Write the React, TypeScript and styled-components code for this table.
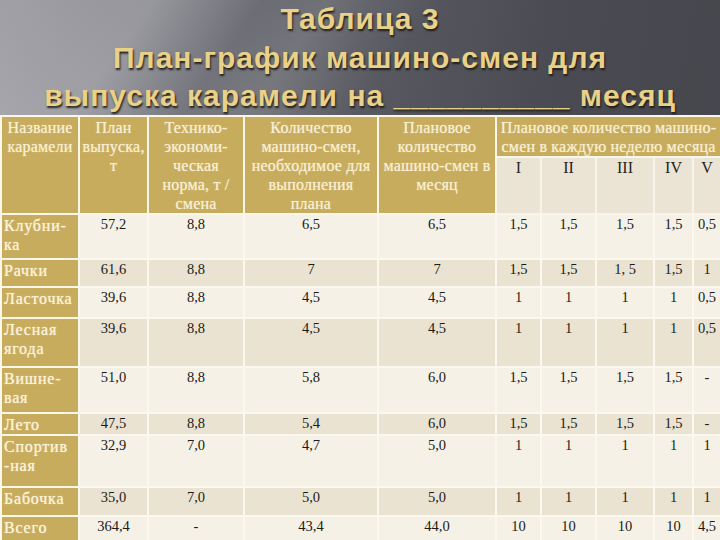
import React from 'react';
import styled, { createGlobalStyle } from 'styled-components';

const GlobalStyle = createGlobalStyle`
    body {
        margin: 0;
        background: #4c4c54;
    }
`;

interface IRow {
    name: React.ReactNode,
    plan: string,
    norm: string,
    need: string,
    month: string,
    weeks: string[],
    height: number
}

const rows: IRow[] = [
    {name: <>Клубни-<br/>ка</>, plan: '57,2', norm: '8,8', need: '6,5', month: '6,5', weeks: ['1,5', '1,5', '1,5', '1,5', '0,5'], height: 45},
    {name: 'Рачки', plan: '61,6', norm: '8,8', need: '7', month: '7', weeks: ['1,5', '1,5', '1, 5', '1,5', '1'], height: 28},
    {name: 'Ласточка', plan: '39,6', norm: '8,8', need: '4,5', month: '4,5', weeks: ['1', '1', '1', '1', '0,5'], height: 31},
    {name: <>Лесная<br/>ягода</>, plan: '39,6', norm: '8,8', need: '4,5', month: '4,5', weeks: ['1', '1', '1', '1', '0,5'], height: 49},
    {name: <>Вишне-<br/>вая</>, plan: '51,0', norm: '8,8', need: '5,8', month: '6,0', weeks: ['1,5', '1,5', '1,5', '1,5', '-'], height: 46},
    {name: 'Лето', plan: '47,5', norm: '8,8', need: '5,4', month: '6,0', weeks: ['1,5', '1,5', '1,5', '1,5', '-'], height: 20},
    {name: <>Спортив<br/>-ная</>, plan: '32,9', norm: '7,0', need: '4,7', month: '5,0', weeks: ['1', '1', '1', '1', '1'], height: 52},
    {name: 'Бабочка', plan: '35,0', norm: '7,0', need: '5,0', month: '5,0', weeks: ['1', '1', '1', '1', '1'], height: 29},
    {name: 'Всего', plan: '364,4', norm: '-', need: '43,4', month: '44,0', weeks: ['10', '10', '10', '10', '4,5'], height: 32},
];

const colWidths = [78, 69, 96, 134, 118, 45, 55, 58, 39, 28];

const Slide = styled.div`
    width: 720px;
    height: 540px;
    overflow: hidden;
    background:
        linear-gradient(125deg, rgba(255,255,255,0) 0%, rgba(255,255,255,0.18) 14%, rgba(255,255,255,0) 24%, rgba(255,255,255,0.1) 30%, rgba(255,255,255,0) 40%),
        linear-gradient(100deg, #a0a0a6 0%, #7a7a82 22%, #5a5a62 45%, #4a4a52 70%, #45454c 100%);
`;

const Title = styled.h1`
    margin: 0;
    height: 115px;
    text-align: center;
    font-family: "Liberation Sans", Arial, sans-serif;
    font-weight: bold;
    font-size: 30px;
    line-height: 38.5px;
    color: #e9d189;
    text-shadow: 1px 2px 2px rgba(25, 24, 18, 0.9);
    letter-spacing: 1px;
`;

const Grid = styled.table`
    table-layout: fixed;
    width: 720px;
    border-collapse: collapse;
    font-family: "Liberation Serif", "Times New Roman", serif;
`;

const Row = styled.tr<{h: number}>`
    height: ${props => props.h}px;
`;

const HeadCell = styled.th`
    background: #c8ac5e;
    color: #f8f0d4;
    font-weight: normal;
    font-size: 16px;
    line-height: 19px;
    letter-spacing: 0.2px;
    padding: 1px 0 0;
    vertical-align: top;
    text-align: center;
    white-space: nowrap;
    overflow: hidden;
    border: 2px solid #fbf7ea;
    text-shadow: 0 0 1px rgba(255, 250, 220, 0.6);
`;

const WeekCell = styled.th`
    background: #ebe4d5;
    color: #262420;
    font-weight: normal;
    font-size: 16px;
    line-height: 19px;
    padding: 0;
    vertical-align: top;
    text-align: center;
    border: 2px solid #f8f4ea;
`;

const NameCell = styled.td`
    background: #c8ac5e;
    color: #fbf3da;
    font-size: 16px;
    line-height: 19px;
    letter-spacing: 0.8px;
    padding: 1px 0 0 2px;
    vertical-align: top;
    white-space: nowrap;
    overflow: hidden;
    border: 2px solid #fbf7ea;
    text-shadow: 0 0 1px rgba(255, 250, 220, 0.8);
`;

const NumCell = styled.td<{shade: boolean}>`
    background: ${props => props.shade ? '#eae3d2' : '#f5f1e7'};
    color: #1c1b18;
    font-size: 14.5px;
    line-height: 19px;
    padding: 0;
    vertical-align: top;
    text-align: center;
    white-space: nowrap;
    border: 2px solid #fbf8ef;
`;

const App = () => {
    return <>
        <GlobalStyle/>
        <Slide>
            <Title>
                Таблица 3<br/>
                План-график машино-смен для<br/>
                выпуска карамели на __________ месяц
            </Title>
            <Grid>
                <colgroup>
                    {colWidths.map((w, i) => <col key={i} style={{width: w}}/>)}
                </colgroup>
                <thead>
                    <Row h={37}>
                        <HeadCell rowSpan={2}>Название<br/>карамели</HeadCell>
                        <HeadCell rowSpan={2}>План<br/>выпуска,<br/>т</HeadCell>
                        <HeadCell rowSpan={2}>Технико-<br/>экономи-<br/>ческая<br/>норма, т /<br/>смена</HeadCell>
                        <HeadCell rowSpan={2}>Количество<br/>машино-смен,<br/>необходимое для<br/>выполнения<br/>плана</HeadCell>
                        <HeadCell rowSpan={2}>Плановое<br/>количество<br/>машино-смен в<br/>месяц</HeadCell>
                        <HeadCell colSpan={5}>Плановое количество машино-<br/>смен в каждую неделю месяца</HeadCell>
                    </Row>
                    <Row h={57}>
                        {['I', 'II', 'III', 'IV', 'V'].map(w => <WeekCell key={w}>{w}</WeekCell>)}
                    </Row>
                </thead>
                <tbody>
                    {rows.map((r, i) =>
                        <Row h={r.height} key={i}>
                            <NameCell>{r.name}</NameCell>
                            <NumCell shade={i % 2 === 1}>{r.plan}</NumCell>
                            <NumCell shade={i % 2 === 1}>{r.norm}</NumCell>
                            <NumCell shade={i % 2 === 1}>{r.need}</NumCell>
                            <NumCell shade={i % 2 === 1}>{r.month}</NumCell>
                            {r.weeks.map((w, j) => <NumCell shade={i % 2 === 1} key={j}>{w}</NumCell>)}
                        </Row>
                    )}
                </tbody>
            </Grid>
        </Slide>
    </>
}

export default App;
